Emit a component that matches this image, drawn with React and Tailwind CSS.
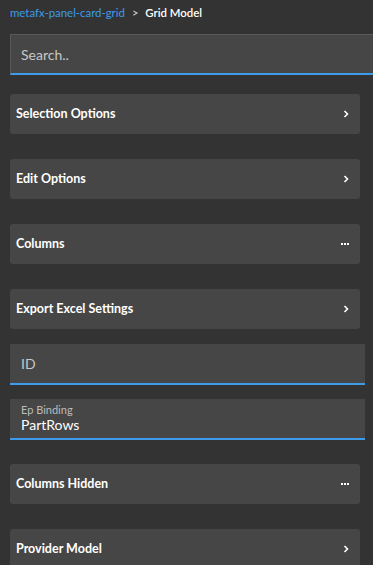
import React from "react";

function Chevron() {
  return (
    <svg width="6" height="8" viewBox="0 0 6 8" className="shrink-0">
      <path d="M1.5 1 L4.5 4 L1.5 7" fill="none" stroke="#ffffff" strokeWidth="1.6" />
    </svg>
  );
}

function Dots() {
  return (
    <div className="flex gap-[1px] shrink-0">
      <span className="w-[2px] h-[2px] bg-white block" />
      <span className="w-[2px] h-[2px] bg-white block" />
      <span className="w-[2px] h-[2px] bg-white block" />
    </div>
  );
}

function Card({ label, icon, mb = "mb-[25px]" }) {
  return (
    <div className={`ml-[10px] mr-[13px] h-[40px] rounded-[3px] bg-[#464646] flex items-center justify-between pl-[6px] pr-[11px] ${mb}`}>
      <span className="text-[12.5px] font-bold text-white">{label}</span>
      {icon === "dots" ? <Dots /> : <Chevron />}
    </div>
  );
}

export default function App() {
  return (
    <div
      className="w-[373px] h-[565px] overflow-hidden bg-[#333333]"
      style={{ fontFamily: "Lato, 'Noto Sans', sans-serif" }}
    >
      <div className="h-[34px] pl-[10px] pt-[5px] flex items-start gap-[6px] text-[11.4px] leading-[16px]">
        <span className="text-[#3d9be9]">metafx-panel-card-grid</span>
        <span className="text-[#dddddd] text-[11px] px-[1px]">&gt;</span>
        <span className="text-white font-semibold">Grid Model</span>
      </div>
      <div className="ml-[10px] h-[41px] bg-[#464646] border-t border-l border-[#5a5a5a] border-b-2 border-b-[#3d9be9] flex items-center pl-[10px] mb-[19px]">
        <span className="text-[14px] text-[#c8c8c8]">Search..</span>
      </div>
      <Card label="Selection Options" icon="chev" />
      <Card label="Edit Options" icon="chev" />
      <Card label="Columns" icon="dots" />
      <Card label="Export Excel Settings" icon="chev" mb="mb-[15px]" />
      <div className="ml-[10px] mr-[8px] h-[41px] bg-[#464646] border-b-2 border-b-[#3d9be9] flex items-center pl-[11px] mb-[14px]">
        <span className="text-[14px] text-[#c8c8c8]">ID</span>
      </div>
      <div className="ml-[10px] mr-[8px] h-[41px] bg-[#464646] border-b-2 border-b-[#3d9be9] flex flex-col justify-center pl-[11px] mb-[24px]">
        <span className="text-[11px] leading-[13px] text-[#bbbbbb]">Ep Binding</span>
        <span className="text-[14px] leading-[18px] text-white">PartRows</span>
      </div>
      <Card label="Columns Hidden" icon="dots" />
      <Card label="Provider Model" icon="chev" />
    </div>
  );
}
